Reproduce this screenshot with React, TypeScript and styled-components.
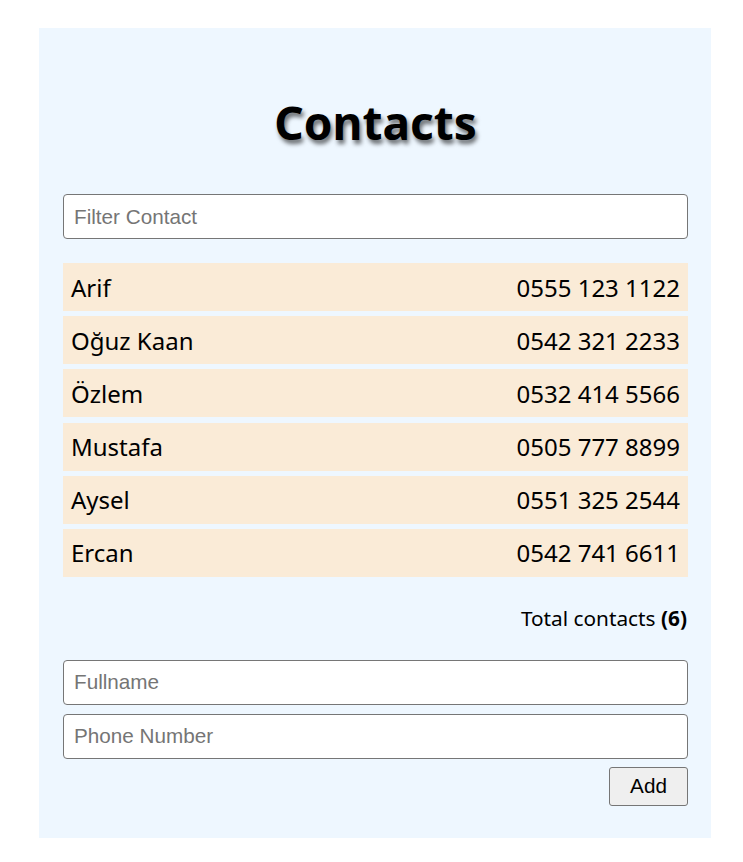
import React, { useState } from "react";
import styled, { createGlobalStyle } from "styled-components";

const Global = createGlobalStyle`
  html, body { margin: 0; padding: 0; background: #ffffff; }
  body { font-family: "Noto Sans", "Open Sans", sans-serif; }
  * { box-sizing: border-box; }
`;

const Page = styled.div`
  padding: 28px 32px 24px 39px;
`;

const Panel = styled.main`
  background: #eef7ff;
  padding: 62px 23px 32px 24px;
  display: flex;
  flex-direction: column;
`;

const Title = styled.h1`
  margin: 0 0 40px;
  text-align: center;
  font-family: "Noto Sans", sans-serif;
  font-weight: 700;
  font-size: 46px;
  line-height: 64px;
  color: #000;
  text-shadow: 2px 4px 4px rgba(0, 0, 0, 0.55);
`;

const Input = styled.input`
  width: 100%;
  height: 45px;
  padding: 0 10px;
  border: 1px solid #767676;
  border-radius: 4px;
  background: #fff;
  font-family: "Liberation Sans", Arial, sans-serif;
  font-size: 20.7px;
  color: #000;
  &::placeholder { color: #757575; }
`;

const List = styled.ul`
  list-style: none;
  margin: 24px 0 0;
  padding: 0;
  display: flex;
  flex-direction: column;
  gap: 5.2px;
`;

const Row = styled.li`
  height: 48px;
  background: #faebd7;
  display: flex;
  align-items: center;
  justify-content: space-between;
  padding: 0 8px;
  font-size: 24px;
  color: #000;
`;

const Total = styled.div`
  margin-top: 27px;
  padding-right: 1px;
  text-align: right;
  font-size: 20.8px;
  line-height: 28px;
  color: #000;
  b { font-weight: 700; }
`;

const Form = styled.form`
  margin-top: 28px;
  display: flex;
  flex-direction: column;
  gap: 9px;
`;

const Actions = styled.div`
  display: flex;
  justify-content: flex-end;
  margin-top: -1px;
`;

const Button = styled.button`
  width: 79px;
  height: 39px;
  background: #efefef;
  border: 1px solid #767676;
  border-radius: 3px;
  font-family: "Liberation Sans", Arial, sans-serif;
  font-size: 20.7px;
  color: #000;
`;

const contacts = [
  { name: "Arif", phone: "0555 123 1122" },
  { name: "Oğuz Kaan", phone: "0542 321 2233" },
  { name: "Özlem", phone: "0532 414 5566" },
  { name: "Mustafa", phone: "0505 777 8899" },
  { name: "Aysel", phone: "0551 325 2544" },
  { name: "Ercan", phone: "0542 741 6611" },
];

export default function App() {
  const [filter, setFilter] = useState("");
  const shown = contacts.filter((c) =>
    c.name.toLowerCase().includes(filter.toLowerCase())
  );
  return (
    <Page>
      <Global />
      <Panel>
        <Title>Contacts</Title>
        <Input
          placeholder="Filter Contact"
          value={filter}
          onChange={(e) => setFilter(e.target.value)}
        />
        <List>
          {shown.map((c) => (
            <Row key={c.name}>
              <span>{c.name}</span>
              <span>{c.phone}</span>
            </Row>
          ))}
        </List>
        <Total>
          Total contacts <b>({shown.length})</b>
        </Total>
        <Form onSubmit={(e) => e.preventDefault()}>
          <Input placeholder="Fullname" />
          <Input placeholder="Phone Number" />
          <Actions>
            <Button type="submit">Add</Button>
          </Actions>
        </Form>
      </Panel>
    </Page>
  );
}
